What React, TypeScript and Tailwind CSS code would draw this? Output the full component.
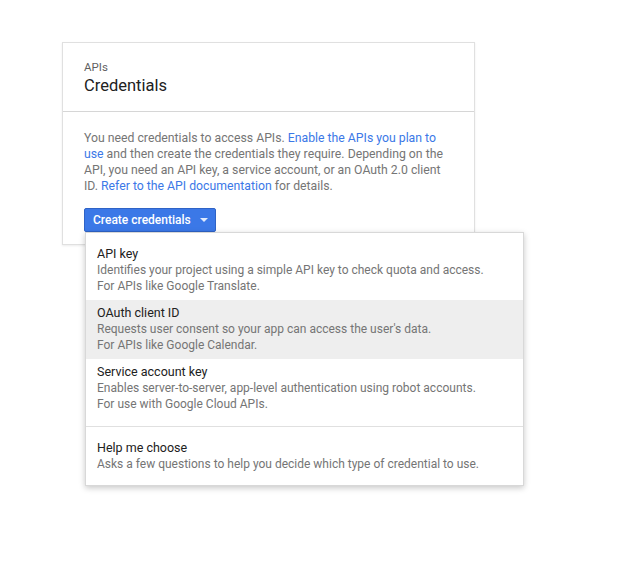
import React from "react";

const items = [
  {
    title: "API key",
    desc: ["Identifies your project using a simple API key to check quota and access.", "For APIs like Google Translate."],
  },
  {
    title: "OAuth client ID",
    desc: ["Requests user consent so your app can access the user's data.", "For APIs like Google Calendar."],
    active: true,
  },
  {
    title: "Service account key",
    desc: ["Enables server-to-server, app-level authentication using robot accounts.", "For use with Google Cloud APIs."],
  },
];

export default function App() {
  return (
    <div className="w-[626px] h-[563px] bg-white" style={{ fontFamily: "Roboto, 'Liberation Sans', sans-serif" }}>
      <div className="pt-[42px] pl-[62px]">
        <div className="relative w-[413px] border border-[#e0e0e0] bg-white shadow-[0_1px_2px_rgba(0,0,0,0.08)]">
          <div className="px-[21px] pt-[16px] pb-[14px] border-b border-[#d6d6d6]">
            <div className="text-[11.5px] leading-[16px] text-[#5f5f5f]">APIs</div>
            <div className="text-[16.5px] leading-[22px] text-[#212121]">Credentials</div>
          </div>
          <div className="px-[21px] pt-[18px] pb-[12px]">
            <p className="text-[12.25px] leading-[16px] text-[#757575]">
              You need credentials to access APIs.{" "}
              <span className="text-[#3b78e7]">Enable the APIs you plan to use</span> and then create the credentials they
              require. Depending on the API, you need an API key, a service account, or an OAuth 2.0 client ID.{" "}
              <span className="text-[#3b78e7]">Refer to the API documentation</span> for details.
            </p>
            <div className="mt-[14px] h-[24px] w-[132px] flex items-center rounded-[2px] bg-[#3b78e7] border border-[#2f63c6] pl-[8px] text-[12px] font-medium text-white">
              <span>Create credentials</span>
              <svg width="8" height="4" viewBox="0 0 8 4" className="ml-[9px]">
                <path d="M0 0 L8 0 L4 4 Z" fill="#ffffff" fillOpacity="0.85" />
              </svg>
            </div>
          </div>

          <div className="absolute left-[22px] top-[189px] w-[439px] z-10 bg-white border border-[#d8d8d8] shadow-[0_2px_6px_rgba(0,0,0,0.22)] py-[8px]">
            {items.map((it) => (
              <div
                key={it.title}
                className={`px-[11px] pt-[5px] pb-[6px] ${it.active ? "bg-[#eeeeee]" : ""}`}
              >
                <div className="text-[12.5px] leading-[16px] text-[#212121]">{it.title}</div>
                {it.desc.map((d) => (
                  <div key={d} className="text-[12px] leading-[16px] text-[#757575]">{d}</div>
                ))}
              </div>
            ))}
            <div className="my-[8px] border-t border-[#e0e0e0]" />
            <div className="px-[11px] pt-[5px] pb-[5px]">
              <div className="text-[12.5px] leading-[16px] text-[#212121]">Help me choose</div>
              <div className="text-[12px] leading-[16px] text-[#757575]">
                Asks a few questions to help you decide which type of credential to use.
              </div>
            </div>
          </div>
        </div>
      </div>
    </div>
  );
}
